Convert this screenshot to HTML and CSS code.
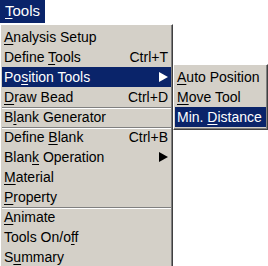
FILE: index.html
```html
<!DOCTYPE html>
<html lang="en">
<head>
  <meta charset="UTF-8">
  <title>Tools menu</title>
  <link rel="stylesheet" href="styles.css">
</head>
<body>
  <div class="menubar">
    <span class="bar-item active"><u>T</u>ools</span>
  </div>

  <div class="menus">
    <!-- main drop-down -->
    <ul class="menu main">
      <li class="item"><span><u>A</u>nalysis Setup</span></li>
      <li class="item"><span>Define <u>T</u>ools</span><span class="key">Ctrl+T</span></li>
      <li class="item selected"><span>Po<u>s</u>ition Tools</span><span class="arrow"></span></li>
      <li class="item"><span><u>D</u>raw Bead</span><span class="key">Ctrl+D</span></li>
      <li class="item sep"><span>B<u>l</u>ank Generator</span></li>
      <li class="item sep"><span>Define <u>B</u>lank</span><span class="key">Ctrl+B</span></li>
      <li class="item"><span>Blan<u>k</u> Operation</span><span class="arrow"></span></li>
      <li class="item"><span><u>M</u>aterial</span></li>
      <li class="item"><span><u>P</u>roperty</span></li>
      <li class="item sep"><span><u>A</u>nimate</span></li>
      <li class="item"><span>Tools On/o<u>f</u>f</span></li>
      <li class="item"><span>S<u>u</u>mmary</span></li>
    </ul>

    <!-- Position Tools submenu -->
    <ul class="menu sub">
      <li class="item"><span><u>A</u>uto Position</span></li>
      <li class="item"><span><u>M</u>ove Tool</span></li>
      <li class="item selected"><span>Min. <u>D</u>istance</span></li>
    </ul>
  </div>
</body>
</html>
```

FILE: styles.css
```css
body {
  margin: 0;
  background: #fff;
  font-family: 'Liberation Sans', Arial, sans-serif;
  font-size: 14px;
  color: #000;
  width: 268px;
  height: 266px;
  overflow: hidden;
}

u {
  text-underline-offset: 2px;
}

.menubar {
  display: flex;
  height: 23px;
}

.bar-item {
  width: 45px;
  height: 23px;
  line-height: 22px;
  padding-left: 5px;
  box-sizing: border-box;
  font-size: 15px;
}

.bar-item.active {
  background: #0a246a;
  color: #fff;
}

.menus {
  display: flex;
  align-items: flex-start;
  margin-top: 1px;
}

.menu {
  list-style: none;
  margin: 0;
  padding: 2px 1px;
  background: #d4d0c8;
  border: 1px solid;
  border-color: #fff #404040 #404040 #fff;
  box-shadow: inset -1px -1px #808080;
}

.main {
  width: 169px;
}

.sub {
  width: 91px;
  margin-top: 40px;
}

.item {
  display: flex;
  justify-content: space-between;
  align-items: center;
  height: 20px;
  line-height: 20px;
  padding: 0 3px 0 2px;
  white-space: nowrap;
}

.item.sep {
  background-image: linear-gradient(#808080, #808080), linear-gradient(#fff, #fff);
  background-size: 100% 1px, 100% 1px;
  background-position: 0 0, 0 1px;
  background-repeat: no-repeat;
}

.item.selected {
  background: #0a246a;
  color: #fff;
}

.arrow {
  width: 0;
  height: 0;
  border-top: 5px solid transparent;
  border-bottom: 5px solid transparent;
  border-left: 9px solid #000;
  margin-right: 0;
}

.selected .arrow {
  border-left-color: #fff;
}
```
